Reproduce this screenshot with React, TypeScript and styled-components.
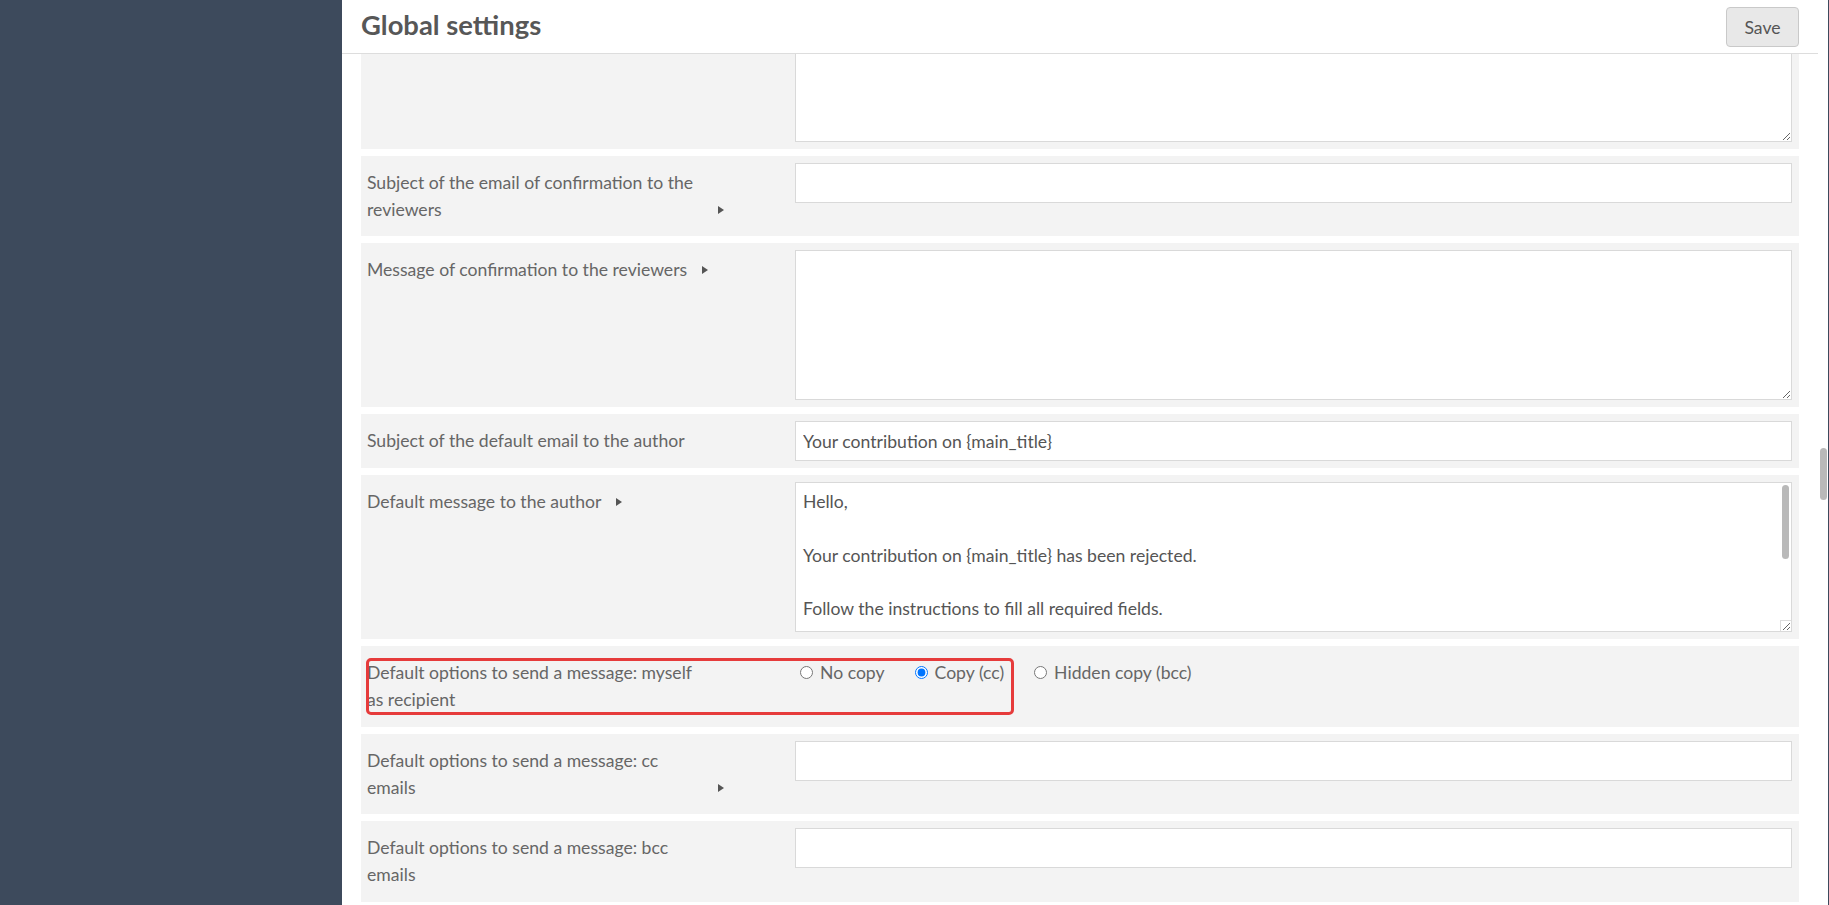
import React, { useLayoutEffect, useRef, useState } from "react";
import styled, { createGlobalStyle, css } from "styled-components";

const GlobalStyle = createGlobalStyle`
  html, body {
    margin: 0;
    padding: 0;
    height: 100%;
    overflow: hidden;
  }
  body {
    font-family: Lato, "Noto Sans", "Liberation Sans", sans-serif;
    background: #3d4a5c;
  }
  * { box-sizing: border-box; }
`;

const FONT_SIZE = "17.6px";
const LINE = "26.7px";
const ROW_STEP = 171;

const Shell = styled.div`
  display: grid;
  grid-template-columns: 342px 1486px 1fr;
  height: 905px;
  width: 100%;
`;

const Sidebar = styled.aside`
  background: #3d4a5c;
`;

const Main = styled.main`
  display: flex;
  height: 905px;
  background: #ffffff;
  overflow: hidden;
`;

const ScrollArea = styled.div`
  position: relative;
  flex: 1;
  height: 100%;
  overflow-y: scroll;
  overflow-x: hidden;
  scrollbar-width: none;
  &::-webkit-scrollbar {
    display: none;
  }
`;

const Track = styled.div`
  position: relative;
  flex: 0 0 10px;
  height: 100%;
  background: #ffffff;
`;

const Thumb = styled.div`
  position: absolute;
  left: 2px;
  right: 1px;
  border-radius: 4px;
  background: #b9b9b9;
`;

const Header = styled.header`
  position: sticky;
  top: 0;
  z-index: 2;
  height: 54px;
  padding: 0 19px;
  display: flex;
  align-items: center;
  justify-content: space-between;
  background: #ffffff;
  border-bottom: 1px solid #dddddd;
`;

const Title = styled.h1`
  margin: -2px 0 0 0;
  font-size: 27.4px;
  line-height: 1.2;
  font-weight: 700;
  color: #575757;
`;

const SaveButton = styled.button`
  height: 40px;
  width: 73px;
  margin-top: 1px;
  border: 1px solid #c9c9c9;
  border-radius: 4px;
  background: #e8e8e8;
  color: #555555;
  font-family: inherit;
  font-size: ${FONT_SIZE};
  cursor: pointer;
`;

const Form = styled.div`
  display: flex;
  flex-direction: column;
  gap: 7px;
  padding: 7px 19px 4px 19px;
`;

const OffscreenRows = styled.div<{ $count: number }>`
  flex: 0 0 auto;
  height: ${(p) => p.$count * ROW_STEP - 7}px;
`;

const Row = styled.div`
  position: relative;
  display: grid;
  grid-template-columns: 427px 1fr;
  background: #f3f3f3;
`;

const LabelCell = styled.div`
  padding: 14px 7px 13px 6px;
  font-size: ${FONT_SIZE};
  line-height: ${LINE};
  color: #666666;
`;

const LabelText = styled.span`
  display: inline-block;
  max-width: 336px;
`;

const Arrow = styled.span`
  display: inline-block;
  width: 0;
  height: 0;
  margin-left: 10px;
  vertical-align: 2px;
  border-left: 6px solid #555555;
  border-top: 4.5px solid transparent;
  border-bottom: 4.5px solid transparent;
`;

const ControlCell = styled.div<{ $padded?: boolean }>`
  padding: 7px;
  ${(p) =>
    p.$padded &&
    css`
      padding: 14px 7px 13px 7px;
    `}
`;

const FieldWrap = styled.div`
  position: relative;
`;

const fieldBase = css`
  width: 100%;
  border: 1px solid #d9d9d9;
  background: #ffffff;
  color: #555555;
  font-family: inherit;
  font-size: ${FONT_SIZE};
  outline: none;
`;

const TextInput = styled.input`
  ${fieldBase};
  display: block;
  height: 40px;
  padding: 0 7px;
`;

const TextArea = styled.textarea`
  ${fieldBase};
  display: block;
  height: 150px;
  padding: 6px 7px;
  line-height: ${LINE};
  resize: vertical;
  scrollbar-width: none;
  &::-webkit-scrollbar {
    display: none;
  }
`;

const FieldThumb = styled.div`
  position: absolute;
  top: 3px;
  right: 3px;
  width: 7px;
  height: 74px;
  border-radius: 4px;
  background: #b9b9b9;
  pointer-events: none;
`;

const FieldCorner = styled.div`
  position: absolute;
  right: 1px;
  bottom: 1px;
  width: 11px;
  height: 11px;
  border-left: 1px solid #dcdcdc;
  border-top: 1px solid #dcdcdc;
  pointer-events: none;
`;

const RadioGroup = styled.div`
  font-size: ${FONT_SIZE};
  line-height: ${LINE};
  color: #666666;
`;

const RadioOption = styled.label`
  margin-right: 25px;
  white-space: nowrap;
`;

const Radio = styled.input`
  margin: 3px 7px 0 5px;
`;

const Highlight = styled.div`
  position: absolute;
  left: 5px;
  top: 12px;
  width: 648px;
  height: 57px;
  border: 3px solid #e63b3b;
  border-radius: 5px;
  pointer-events: none;
`;

type Setting = {
  label: string;
  kind: "input" | "textarea";
  arrow?: boolean;
  value?: string;
  scrolled?: boolean;
};

const authorMessage = [
  "Hello,",
  "",
  "Your contribution on {main_title} has been rejected.",
  "",
  "Follow the instructions to fill all required fields.",
  "",
  "Thank you for your understanding.",
  "",
  "Best regards,",
  "The editorial team",
].join("\n");

const settings: Setting[] = [
  { label: "Subject of the email of confirmation to the reviewers", kind: "input", arrow: true },
  { label: "Message of confirmation to the reviewers", kind: "textarea", arrow: true },
  { label: "Subject of the default email to the author", kind: "input", value: "Your contribution on {main_title}" },
  { label: "Default message to the author", kind: "textarea", arrow: true, value: authorMessage, scrolled: true },
];

const ccSettings: Setting[] = [
  { label: "Default options to send a message: cc emails", kind: "input", arrow: true },
  { label: "Default options to send a message: bcc emails", kind: "input" },
];

function SettingRow({ s, rowRef }: { s: Setting; rowRef?: React.Ref<HTMLDivElement> }) {
  return (
    <Row ref={rowRef}>
      <LabelCell>
        {s.label ? <LabelText>{s.label}</LabelText> : null}
        {s.arrow ? " " : null}
        {s.arrow ? <Arrow /> : null}
      </LabelCell>
      <ControlCell>
        {s.kind === "input" ? (
          <TextInput type="text" defaultValue={s.value ?? ""} />
        ) : (
          <FieldWrap>
            <TextArea defaultValue={s.value ?? ""} />
            {s.scrolled ? <FieldThumb /> : null}
            {s.scrolled ? <FieldCorner /> : null}
          </FieldWrap>
        )}
      </ControlCell>
    </Row>
  );
}

export default function App() {
  const areaRef = useRef<HTMLDivElement>(null);
  const anchorRef = useRef<HTMLDivElement>(null);
  const [thumb, setThumb] = useState({ top: 445, height: 51 });

  useLayoutEffect(() => {
    const area = areaRef.current;
    const anchor = anchorRef.current;
    if (area && anchor) {
      area.scrollTop = anchor.offsetTop - 156;
      const track = area.clientHeight;
      const ratio = track / area.scrollHeight;
      setThumb({ top: area.scrollTop * ratio, height: Math.max(20, track * ratio) });
    }
  }, []);

  return (
    <>
      <GlobalStyle />
      <Shell>
        <Sidebar />
        <Main>
          <ScrollArea ref={areaRef}>
            <Header>
              <Title>Global settings</Title>
              <SaveButton type="button">Save</SaveButton>
            </Header>
            <Form>
              <OffscreenRows $count={45} />
              <SettingRow s={{ label: "", kind: "textarea" }} />
              {settings.map((s, i) => (
                <SettingRow key={s.label} s={s} rowRef={i === 0 ? anchorRef : undefined} />
              ))}
              <Row>
                <LabelCell>
                  <LabelText>Default options to send a message: myself as recipient</LabelText>
                </LabelCell>
                <ControlCell $padded>
                  <RadioGroup>
                    <RadioOption>
                      <Radio type="radio" name="myself" value="none" />
                      No copy
                    </RadioOption>
                    <RadioOption>
                      <Radio type="radio" name="myself" value="cc" defaultChecked />
                      Copy (cc)
                    </RadioOption>
                    <RadioOption>
                      <Radio type="radio" name="myself" value="bcc" />
                      Hidden copy (bcc)
                    </RadioOption>
                  </RadioGroup>
                </ControlCell>
                <Highlight />
              </Row>
              {ccSettings.map((s) => (
                <SettingRow key={s.label} s={s} />
              ))}
              <OffscreenRows $count={41} />
            </Form>
          </ScrollArea>
          <Track>
            <Thumb style={{ top: thumb.top, height: thumb.height }} />
          </Track>
        </Main>
      </Shell>
    </>
  );
}
